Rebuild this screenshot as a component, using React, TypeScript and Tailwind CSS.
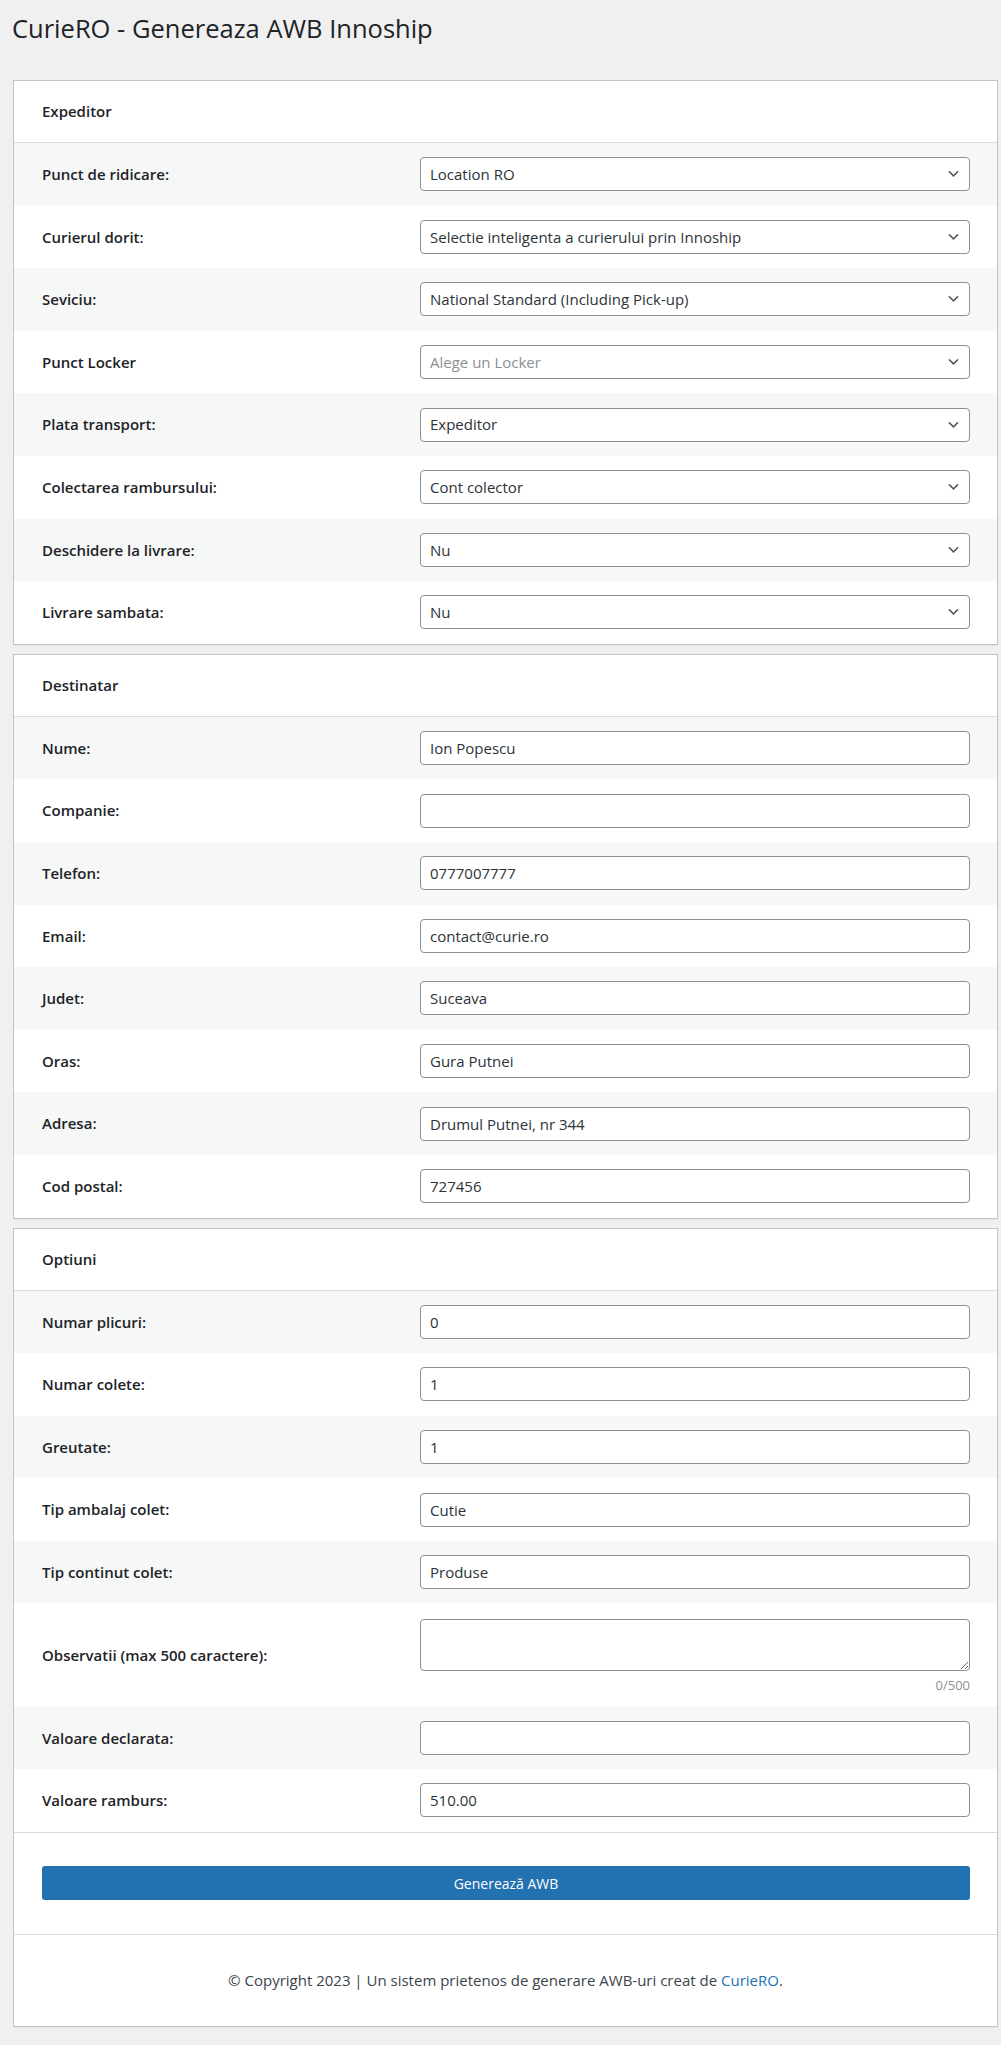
import type { ReactNode } from 'react';

type Field =
  | { kind: 'select'; label: string; value: string; placeholder?: boolean }
  | { kind: 'input'; label: string; value: string }
  | { kind: 'textarea'; label: string };

const expeditor: Field[] = [
  { kind: 'select', label: 'Punct de ridicare:', value: 'Location RO' },
  { kind: 'select', label: 'Curierul dorit:', value: 'Selectie inteligenta a curierului prin Innoship' },
  { kind: 'select', label: 'Seviciu:', value: 'National Standard (Including Pick-up)' },
  { kind: 'select', label: 'Punct Locker', value: 'Alege un Locker', placeholder: true },
  { kind: 'select', label: 'Plata transport:', value: 'Expeditor' },
  { kind: 'select', label: 'Colectarea rambursului:', value: 'Cont colector' },
  { kind: 'select', label: 'Deschidere la livrare:', value: 'Nu' },
  { kind: 'select', label: 'Livrare sambata:', value: 'Nu' },
];

const destinatar: Field[] = [
  { kind: 'input', label: 'Nume:', value: 'Ion Popescu' },
  { kind: 'input', label: 'Companie:', value: '' },
  { kind: 'input', label: 'Telefon:', value: '0777007777' },
  { kind: 'input', label: 'Email:', value: 'contact@curie.ro' },
  { kind: 'input', label: 'Judet:', value: 'Suceava' },
  { kind: 'input', label: 'Oras:', value: 'Gura Putnei' },
  { kind: 'input', label: 'Adresa:', value: 'Drumul Putnei, nr 344' },
  { kind: 'input', label: 'Cod postal:', value: '727456' },
];

const optiuni: Field[] = [
  { kind: 'input', label: 'Numar plicuri:', value: '0' },
  { kind: 'input', label: 'Numar colete:', value: '1' },
  { kind: 'input', label: 'Greutate:', value: '1' },
  { kind: 'input', label: 'Tip ambalaj colet:', value: 'Cutie' },
  { kind: 'input', label: 'Tip continut colet:', value: 'Produse' },
  { kind: 'textarea', label: 'Observatii (max 500 caractere):' },
  { kind: 'input', label: 'Valoare declarata:', value: '' },
  { kind: 'input', label: 'Valoare ramburs:', value: '510.00' },
];

const control =
  'h-[34px] w-full rounded-[4px] border border-[#8c8f94] bg-white px-[9px] text-[15px] text-[#2c3338] outline-none';

function Chevron() {
  return (
    <svg
      viewBox="0 0 20 20"
      className="pointer-events-none absolute right-[9px] top-1/2 h-[15px] w-[15px] -translate-y-1/2"
    >
      <path d="M5 6l5 5 5-5 2 1-7 7-7-7 2-1z" fill="#50575e" />
    </svg>
  );
}

function Control({ field }: { field: Field }) {
  if (field.kind === 'select') {
    return (
      <div className="relative">
        <select
          defaultValue={field.value}
          className={`${control} appearance-none pr-[30px] ${field.placeholder ? 'text-[#8c8f94]' : ''}`}
        >
          <option>{field.value}</option>
        </select>
        <Chevron />
      </div>
    );
  }
  if (field.kind === 'textarea') {
    return (
      <div className="flex flex-col pt-[3px]">
        <textarea className="h-[52px] w-full resize-y rounded-[4px] border border-[#8c8f94] bg-white px-[9px] py-[4px] text-[15px] text-[#2c3338] outline-none" />
        <span className="mt-[5px] text-right text-[13px] leading-[18px] text-[#8c8f94]">0/500</span>
      </div>
    );
  }
  return <input type="text" defaultValue={field.value} className={control} />;
}

function Row({ field }: { field: Field }) {
  const tall = field.kind === 'textarea';
  return (
    <div
      className={`flex items-center px-[28px] pr-[27px] odd:bg-[#f6f7f7] ${tall ? 'h-[103px]' : 'h-[62.6px]'}`}
    >
      <label className="w-[378px] shrink-0 text-[15px] font-semibold text-[#1d2327]">{field.label}</label>
      <div className="flex-1">
        <Control field={field} />
      </div>
    </div>
  );
}

function Card({ title, fields, children }: { title: string; fields: Field[]; children?: ReactNode }) {
  return (
    <section className="border border-[#c3c4c7] bg-white shadow-[0_1px_1px_rgba(0,0,0,0.04)]">
      <div className="flex h-[62px] items-center border-b border-[#dcdcde] px-[28px] text-[15px] font-semibold text-[#1d2327]">
        {title}
      </div>
      <div>
        {fields.map((f) => (
          <Row key={f.label} field={f} />
        ))}
      </div>
      {children}
    </section>
  );
}

export default function App() {
  return (
    <div className="min-h-screen bg-[#f0f0f1] pb-[20px] font-['Open_Sans','Noto_Sans',sans-serif] text-[#3c434a]">
      <h1 className="pl-[12px] pt-[11px] text-[25.5px] font-normal leading-[34px] text-[#1d2327]">
        CurieRO - Genereaza AWB Innoship
      </h1>
      <div className="ml-[13px] mr-[3px] mt-[35px] flex flex-col gap-[9px]">
        <Card title="Expeditor" fields={expeditor} />
        <Card title="Destinatar" fields={destinatar} />
        <Card title="Optiuni" fields={optiuni}>
          <div className="flex h-[102px] items-center border-t border-[#dcdcde] px-[28px] pr-[27px]">
            <button
              type="button"
              className="h-[34px] w-full rounded-[3px] bg-[#2271b1] text-[14px] text-white"
            >
              Generează AWB
            </button>
          </div>
          <div className="flex h-[92px] items-center justify-center border-t border-[#dcdcde] text-[15px] text-[#3c434a]">
            <p>
              © Copyright 2023 | Un sistem prietenos de generare AWB-uri creat de{' '}
              <a className="text-[#2271b1]">CurieRO</a>.
            </p>
          </div>
        </Card>
      </div>
    </div>
  );
}
